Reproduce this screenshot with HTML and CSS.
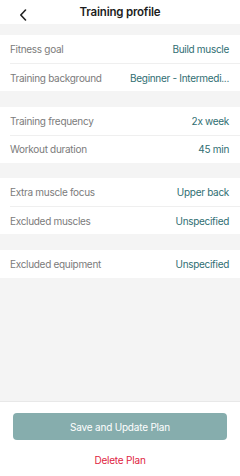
FILE: index.html
```html
<!DOCTYPE html>
<html lang="en">
<head>
    <meta charset="UTF-8">
    <meta name="viewport" content="width=device-width, initial-scale=1.0">
    <title>Training profile</title>
    <link rel="stylesheet" href="styles.css">
</head>
<body>
    <div class="page">
        <header class="header">
            <span class="back">
                <svg width="8" height="12" viewBox="0 0 8 12"><path d="M6.5 1 L1.8 6 L6.5 11" fill="none" stroke="#222" stroke-width="1.6" stroke-linecap="round" stroke-linejoin="round"/></svg>
            </span>
            <h1 class="title">Training profile</h1>
        </header>

        <div class="content">
            <div class="section">
                <div class="row"><span class="label">Fitness goal</span><span class="value">Build muscle</span></div>
                <div class="row"><span class="label">Training background</span><span class="value">Beginner - Intermedi...</span></div>
            </div>
            <div class="section">
                <div class="row"><span class="label">Training frequency</span><span class="value">2x week</span></div>
                <div class="row"><span class="label">Workout duration</span><span class="value">45 min</span></div>
            </div>
            <div class="section">
                <div class="row"><span class="label">Extra muscle focus</span><span class="value">Upper back</span></div>
                <div class="row"><span class="label">Excluded muscles</span><span class="value">Unspecified</span></div>
            </div>
            <div class="section">
                <div class="row"><span class="label">Excluded equipment</span><span class="value">Unspecified</span></div>
            </div>
        </div>

        <footer class="footer">
            <button class="save">Save and Update Plan</button>
            <div class="delete">Delete Plan</div>
        </footer>
    </div>
</body>
</html>
```

FILE: styles.css
```css
body {
    margin: 0;
    font-family: Inter, "Noto Sans", sans-serif;
    background-color: #fff;
}
.page {
    display: flex;
    flex-direction: column;
    height: 476px;
    background-color: #f4f4f4;
}
.header {
    position: relative;
    height: 24px;
    background-color: #fff;
    display: flex;
    align-items: center;
    justify-content: center;
}
.back {
    position: absolute;
    left: 19px;
    top: 5px;
}
.title {
    margin: 0;
    font-size: 11.5px;
    font-weight: 600;
    letter-spacing: -0.2px;
    color: #1d1d1d;
}
.content {
    flex: 1;
    padding-top: 11px;
    display: flex;
    flex-direction: column;
    gap: 15.5px;
}
.section {
    background-color: #fff;
    padding-left: 10px;
}
.row {
    height: 28px;
    display: flex;
    align-items: center;
    justify-content: space-between;
    gap: 10px;
    padding-right: 11px;
    font-size: 10px;
    letter-spacing: -0.3px;
}
.row + .row {
    height: 27px;
    border-top: 1px solid #efefef;
}
.label {
    color: #7b7b7b;
    white-space: nowrap;
}
.value {
    color: #2f6e72;
    white-space: nowrap;
}
.footer {
    background-color: #fff;
    border-top: 1px solid #e8e8e8;
    padding: 11px 13px 0;
    height: 75px;
    box-sizing: border-box;
}
.save {
    width: 100%;
    height: 27px;
    border: none;
    border-radius: 4px;
    background-color: #86adad;
    color: #fff;
    font-family: inherit;
    font-size: 10px;
    letter-spacing: -0.2px;
}
.delete {
    margin-top: 14px;
    text-align: center;
    color: #e0243f;
    font-size: 10px;
    letter-spacing: -0.2px;
}
```
